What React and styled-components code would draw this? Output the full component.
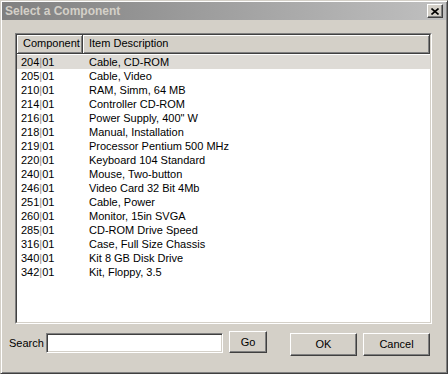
import React from "react";
import styled, { createGlobalStyle } from "styled-components";

const GlobalStyle = createGlobalStyle`
  html, body {
    margin: 0;
    padding: 0;
    background: #d4d0c8;
  }
  body {
    font-family: "Liberation Sans", Arial, sans-serif;
    font-size: 11px;
    color: #000;
  }
`;

const items = [
  ["204", "Cable, CD-ROM"],
  ["205", "Cable, Video"],
  ["210", "RAM, Simm, 64 MB"],
  ["214", "Controller CD-ROM"],
  ["216", "Power Supply, 400\" W"],
  ["218", "Manual, Installation"],
  ["219", "Processor Pentium 500 MHz"],
  ["220", "Keyboard 104 Standard"],
  ["240", "Mouse, Two-button"],
  ["246", "Video Card 32 Bit 4Mb"],
  ["251", "Cable, Power"],
  ["260", "Monitor, 15in SVGA"],
  ["285", "CD-ROM Drive Speed"],
  ["316", "Case, Full Size Chassis"],
  ["340", "Kit 8 GB Disk Drive"],
  ["342", "Kit, Floppy, 3.5"],
];

const Window = styled.div`
  width: 448px;
  height: 374px;
  box-sizing: border-box;
  background: #d4d0c8;
  border: 1px solid;
  border-color: #d4d0c8 #404040 #404040 #d4d0c8;
  box-shadow: inset 1px 1px #fff, inset -1px -1px #808080;
  padding: 1px;
  display: flex;
  flex-direction: column;
`;

const TitleBar = styled.div`
  height: 18px;
  flex: none;
  display: flex;
  align-items: center;
  justify-content: space-between;
  padding: 0 3px 0 3px;
  background: linear-gradient(to right, #808080, #c0c0c0);
`;

const Title = styled.span`
  font-weight: bold;
  font-size: 12px;
  color: #d4d0c8;
  letter-spacing: 0;
`;

const CloseButton = styled.div`
  width: 16px;
  height: 14px;
  box-sizing: border-box;
  background: #d4d0c8;
  border: 1px solid;
  border-color: #fff #404040 #404040 #fff;
  box-shadow: inset -1px -1px #808080;
  display: flex;
  align-items: center;
  justify-content: center;
`;

const ListOuter = styled.div`
  margin: 13px 14px 0 13px;
  height: 291px;
  flex: none;
  box-sizing: border-box;
  border: 1px solid;
  border-color: #808080 #fff #fff #808080;
`;

const ListInner = styled.div`
  height: 100%;
  box-sizing: border-box;
  border: 1px solid;
  border-color: #404040 #d4d0c8 #d4d0c8 #404040;
  background: #fff;
  overflow: hidden;
`;

const HeaderRow = styled.div`
  display: flex;
  height: 19px;
`;

const HeaderCell = styled.div`
  box-sizing: border-box;
  width: ${(p) => (p.$w ? `${p.$w}px` : "auto")};
  flex: ${(p) => (p.$w ? "none" : "1")};
  height: 19px;
  line-height: 17px;
  padding-left: 6px;
  background: #d4d0c8;
  border-right: 1px solid #404040;
  border-bottom: 1px solid #404040;
  box-shadow: inset 1px 1px #fff, inset -1px -1px #808080;
  white-space: nowrap;
`;

const Row = styled.div`
  display: flex;
  height: 14px;
  line-height: 14px;
  margin-top: ${(p) => (p.$first ? "0" : "0")};
  background: ${(p) => (p.$selected ? "#dedbd6" : "transparent")};
`;

const Cell = styled.div`
  box-sizing: border-box;
  width: ${(p) => (p.$w ? `${p.$w}px` : "auto")};
  flex: ${(p) => (p.$w ? "none" : "1")};
  padding-left: ${(p) => p.$pad}px;
  white-space: nowrap;
`;

const Sep = styled.span`
  color: #8c8c8c;
`;

const Rows = styled.div`
  padding-top: 1px;
`;

const BottomRow = styled.div`
  margin-top: 7px;
  height: 25px;
  flex: none;
  display: flex;
  align-items: flex-start;
  padding: 0 16px 0 7px;
`;

const Label = styled.span`
  width: 37px;
  margin-top: 5px;
  line-height: 14px;
`;

const Input = styled.div`
  width: 177px;
  height: 20px;
  margin-top: 2px;
  box-sizing: border-box;
  background: #fff;
  border: 1px solid;
  border-color: #808080 #fff #fff #808080;
  box-shadow: inset 1px 1px #404040, inset -1px -1px #d4d0c8;
`;

const Button = styled.div`
  width: ${(p) => p.$w}px;
  height: ${(p) => p.$h}px;
  margin-top: ${(p) => p.$top}px;
  margin-left: ${(p) => p.$left}px;
  box-sizing: border-box;
  background: #d4d0c8;
  border: 1px solid;
  border-color: #fff #404040 #404040 #fff;
  box-shadow: inset -1px -1px #808080;
  display: flex;
  align-items: center;
  justify-content: center;
  padding-bottom: 1px;
`;

export default function App() {
  return (
    <>
      <GlobalStyle />
      <Window>
        <TitleBar>
          <Title>Select a Component</Title>
          <CloseButton>
            <svg width="8" height="7" viewBox="0 0 8 7">
              <path d="M0.5 0.5 L7.5 6.5 M7.5 0.5 L0.5 6.5" stroke="#000" strokeWidth="1.6" />
            </svg>
          </CloseButton>
        </TitleBar>
        <ListOuter>
          <ListInner>
            <HeaderRow>
              <HeaderCell $w={66}>Component</HeaderCell>
              <HeaderCell>Item Description</HeaderCell>
            </HeaderRow>
            <Rows>
              {items.map(([code, desc], i) => (
                <Row key={code} $selected={i === 0}>
                  <Cell $w={66} $pad={4}>
                    {code}
                    <Sep>|</Sep>
                    01
                  </Cell>
                  <Cell $pad={6}>{desc}</Cell>
                </Row>
              ))}
            </Rows>
          </ListInner>
        </ListOuter>
        <BottomRow>
          <Label>Search</Label>
          <Input />
          <Button $w={38} $h={22} $top={0} $left={6}>Go</Button>
          <Button $w={67} $h={23} $top={2} $left={23}>OK</Button>
          <Button $w={67} $h={23} $top={2} $left={6}>Cancel</Button>
        </BottomRow>
      </Window>
    </>
  );
}
